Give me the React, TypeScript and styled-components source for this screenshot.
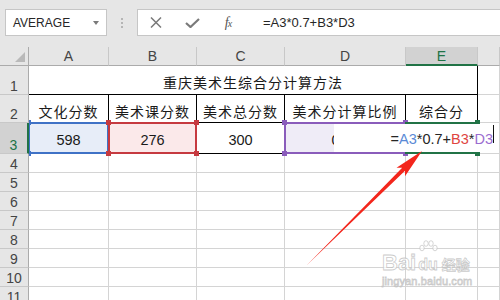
import React from "react";
import styled, { createGlobalStyle } from "styled-components";

const GlobalStyle = createGlobalStyle`
  html, body { margin: 0; padding: 0; background: #ffffff; }
  body { font-family: "Liberation Sans", "Noto Sans CJK SC", sans-serif; }
`;

const Page = styled.div`
  width: 500px;
  height: 300px;
  overflow: hidden;
  position: relative;
  background: #ffffff;
`;

/* ---------- toolbar ---------- */
const Toolbar = styled.div`
  height: 47px;
  box-sizing: border-box;
  background: #e6e6e6;
  display: flex;
  align-items: flex-start;
  padding: 9px 0 0 5px;
`;

const NameBox = styled.div`
  width: 102px;
  height: 27px;
  box-sizing: border-box;
  border: 1px solid #c6c6c6;
  background: #fff;
  display: flex;
  align-items: center;
  justify-content: space-between;
  padding: 0 7px;
  font-size: 12px;
  color: #262626;
`;

const Caret = styled.span`
  width: 0;
  height: 0;
  border-left: 3.5px solid transparent;
  border-right: 3.5px solid transparent;
  border-top: 4px solid #7a7a7a;
`;

const Grip = styled.div`
  width: 30px;
  height: 27px;
  display: flex;
  flex-direction: column;
  align-items: center;
  justify-content: center;
  gap: 2px;
`;

const GripDot = styled.span`
  width: 2px;
  height: 2px;
  background: #b5b5b5;
`;

const FormulaBox = styled.div`
  flex: 1;
  margin-right: -4px;
  height: 27px;
  box-sizing: border-box;
  border: 1px solid #c6c6c6;
  background: #fff;
  display: flex;
  align-items: center;
`;

const ToolButton = styled.div`
  width: 36px;
  height: 25px;
  display: flex;
  align-items: center;
  justify-content: center;
  color: #777;
`;

const FxLabel = styled.span`
  font-family: "Liberation Serif", serif;
  font-style: italic;
  font-size: 14px;
  color: #555;
  letter-spacing: -1px;
  & > small { font-size: 10px; }
`;

const FormulaText = styled.div`
  margin-left: 17px;
  font-size: 13px;
  color: #262626;
`;

/* ---------- sheet ---------- */
const Sheet = styled.div`
  display: grid;
  grid-template-columns: 29px 80px 88px 88px 121px 72px 1fr;
  grid-template-rows: 19px 29px 28px 31px repeat(8, 19px);
  font-size: 14px;
  color: #1a1a1a;
`;

const Corner = styled.div`
  box-sizing: border-box;
  background: #e6e6e6;
  border-right: 1px solid #ababab;
  border-bottom: 1px solid #ababab;
  position: relative;
  &::after {
    content: "";
    position: absolute;
    right: 3px;
    bottom: 3px;
    width: 0;
    height: 0;
    border-left: 10px solid transparent;
    border-bottom: 10px solid #b9b9b9;
  }
`;

const ColHeader = styled.div<{ $selected?: boolean }>`
  box-sizing: border-box;
  background: ${(p) => (p.$selected ? "#d2d2d2" : "#e6e6e6")};
  border-right: 1px solid #c8c8c8;
  border-bottom: ${(p) => (p.$selected ? "2px solid #217346" : "1px solid #ababab")};
  color: ${(p) => (p.$selected ? "#217346" : "#444")};
  display: flex;
  align-items: center;
  justify-content: center;
  font-size: 14px;
`;

const RowHeader = styled.div<{ $selected?: boolean }>`
  box-sizing: border-box;
  position: relative;
  z-index: 2;
  background: ${(p) => (p.$selected ? "#d2d2d2" : "#e6e6e6")};
  border-right: ${(p) => (p.$selected ? "2px solid #217346" : "1px solid #ababab")};
  border-bottom: 1px solid #c8c8c8;
  color: ${(p) => (p.$selected ? "#217346" : "#444")};
  display: flex;
  align-items: flex-end;
  justify-content: center;
  font-size: 14px;
`;

const Cell = styled.div<{ $line?: string; $fill?: string; $span?: number }>`
  box-sizing: border-box;
  position: relative;
  background: ${(p) => p.$fill || "#fff"};
  border-right: 1px solid ${(p) => p.$line || "#d4d4d4"};
  border-bottom: 1px solid ${(p) => p.$line || "#d4d4d4"};
  grid-column: ${(p) => (p.$span ? `span ${p.$span}` : "auto")};
  display: flex;
  align-items: center;
  justify-content: center;
  padding-top: 4px;
  white-space: nowrap;
`;

const CjkText = styled.span`
  font-family: "Noto Sans CJK SC", sans-serif;
  font-size: 14px;
  letter-spacing: 1px;
  line-height: 20px;
`;

const NumText = styled.span<{ $shift?: number }>`
  font-size: 14.5px;
  margin-right: ${(p) => p.$shift || 0}px;
`;

const Highlight = styled.div<{ $color: string }>`
  position: absolute;
  top: -1px;
  left: -1px;
  right: -1px;
  bottom: -1px;
  border: 2px solid ${(p) => p.$color};
  z-index: 1;
  pointer-events: none;
`;

const Handle = styled.span<{ $color: string; $side: "left" | "right"; $edge: "top" | "bottom" }>`
  position: absolute;
  width: 5px;
  height: 5px;
  background: ${(p) => p.$color};
  ${(p) => (p.$side === "left" ? "left: -4px;" : "right: -4px;")}
  ${(p) => (p.$edge === "top" ? "top: -4px;" : "bottom: -4px;")}
`;

const EditBox = styled.div`
  position: absolute;
  top: 1px;
  bottom: 1px;
  left: -72px;
  right: -20px;
  background: #fff;
  z-index: 3;
  display: flex;
  justify-content: flex-end;
  align-items: center;
  padding-right: 3px;
  padding-top: 1px;
  font-size: 14.5px;
  color: #262626;
  white-space: nowrap;
`;

const Ref = styled.span<{ $color: string }>`
  color: ${(p) => p.$color};
`;

const Caret2 = styled.span`
  align-self: flex-start;
  margin-top: 0px;
  width: 1px;
  height: 18px;
  background: #111;
`;

/* ---------- overlays ---------- */
const ArrowLayer = styled.svg`
  position: absolute;
  left: 0;
  top: 0;
  z-index: 5;
  pointer-events: none;
`;

const Watermark = styled.div`
  position: absolute;
  left: 382px;
  top: 240px;
  width: 92px;
  z-index: 4;
  color: rgba(255, 255, 255, 0.75);
  -webkit-text-stroke: 0.8px rgba(185, 185, 185, 0.75);
  font-family: "Liberation Sans", "Noto Sans CJK SC", sans-serif;
  font-weight: bold;
`;

const WmLine = styled.div`
  display: flex;
  align-items: flex-end;
  height: 34px;
  white-space: nowrap;
`;

const WmBig = styled.span`
  font-size: 22px;
  line-height: 22px;
`;

const WmDu = styled.span`
  position: relative;
  font-size: 16px;
  line-height: 18px;
  margin: 0 4px 0 2px;
`;

const WmCn = styled.span`
  font-family: "Noto Sans CJK SC", sans-serif;
  font-size: 14px;
  line-height: 20px;
`;

const Paw = styled.svg`
  position: absolute;
  left: 0px;
  top: -16px;
`;

const WmUrl = styled.div`
  font-size: 11px;
  font-weight: normal;
  margin-top: 1px;
  letter-spacing: 0.1px;
`;

const BLUE = "#3f72c6";
const RED = "#c63a40";
const PURPLE = "#8a5cbb";
const GREEN = "#217346";

function Mark({ color, left = true, right = true }: { color: string; left?: boolean; right?: boolean }) {
  return (
    <Highlight $color={color}>
      {left && <Handle $color={color} $side="left" $edge="top" />}
      {left && <Handle $color={color} $side="left" $edge="bottom" />}
      {right && <Handle $color={color} $side="right" $edge="top" />}
      {right && <Handle $color={color} $side="right" $edge="bottom" />}
    </Highlight>
  );
}

const columns = ["A", "B", "C", "D", "E"];
const headers = ["文化分数", "美术课分数", "美术总分数", "美术分计算比例", "综合分"];
const emptyRows = [4, 5, 6, 7, 8, 9, 10, 11];

export default function App() {
  return (
    <>
      <GlobalStyle />
      <Page>
        <Toolbar>
          <NameBox>
            <span>AVERAGE</span>
            <Caret />
          </NameBox>
          <Grip>
            <GripDot />
            <GripDot />
            <GripDot />
          </Grip>
          <FormulaBox>
            <ToolButton>
              <svg width="12" height="11" viewBox="0 0 12 11">
                <path d="M1 0.5 L11 10.5 M11 0.5 L1 10.5" stroke="#7a7a7a" strokeWidth="1.5" fill="none" />
              </svg>
            </ToolButton>
            <ToolButton>
              <svg width="15" height="10" viewBox="0 0 15 10">
                <path d="M1 5 L5.5 9 L14 1" stroke="#7a7a7a" strokeWidth="2.2" fill="none" />
              </svg>
            </ToolButton>
            <ToolButton>
              <FxLabel>
                f<small>x</small>
              </FxLabel>
            </ToolButton>
            <FormulaText>=A3*0.7+B3*D3</FormulaText>
          </FormulaBox>
        </Toolbar>

        <Sheet>
          <Corner />
          {columns.map((c) => (
            <ColHeader key={c} $selected={c === "E"}>
              {c}
            </ColHeader>
          ))}
          <ColHeader />

          <RowHeader>1</RowHeader>
          <Cell $span={5} $line="#000">
            <CjkText>重庆美术生综合分计算方法</CjkText>
          </Cell>
          <Cell />

          <RowHeader>2</RowHeader>
          {headers.map((h) => (
            <Cell key={h} $line="#000">
              <CjkText>{h}</CjkText>
            </Cell>
          ))}
          <Cell />

          <RowHeader $selected>3</RowHeader>
          <Cell $line="#000" $fill="#e7edf8">
            <NumText>598</NumText>
            <Mark color={BLUE} />
          </Cell>
          <Cell $line="#000" $fill="#fbe9ea">
            <NumText>276</NumText>
            <Mark color={RED} />
          </Cell>
          <Cell $line="#000">
            <NumText>300</NumText>
          </Cell>
          <Cell $line="#000" $fill="#efecf7">
            <NumText $shift={7}>0.7</NumText>
            <Mark color={PURPLE} />
          </Cell>
          <Cell $line="#000">
            <Mark color={GREEN} left={false} />
            <EditBox>
              <span>=</span>
              <Ref $color="#5a8ad6">A3</Ref>
              <span>*0.7+</span>
              <Ref $color="#e0453f">B3</Ref>
              <span>*</span>
              <Ref $color="#9a6cd0">D3</Ref>
              <Caret2 />
            </EditBox>
          </Cell>
          <Cell />

          {emptyRows.map((r) => (
            <React.Fragment key={r}>
              <RowHeader>{r}</RowHeader>
              <Cell />
              <Cell />
              <Cell />
              <Cell />
              <Cell />
              <Cell />
            </React.Fragment>
          ))}
        </Sheet>

        <ArrowLayer width="500" height="300" viewBox="0 0 500 300">
          <polygon
            points="307,265 405,170.7 405,176.3 422,151 396.5,167.8 402.2,167.8"
            fill="#f3261c"
          />
        </ArrowLayer>

        <Watermark>
          <WmLine>
            <WmBig>Bai</WmBig>
            <WmDu>
              <Paw width="20" height="16" viewBox="0 0 20 16">
                <g fill="rgba(255,255,255,0.75)" stroke="rgba(185,185,185,0.75)" strokeWidth="0.8">
                  <ellipse cx="4" cy="8" rx="2.2" ry="2.8" />
                  <ellipse cx="8" cy="3.5" rx="2.2" ry="2.8" />
                  <ellipse cx="13" cy="3.5" rx="2.2" ry="2.8" />
                  <ellipse cx="17" cy="8" rx="2.2" ry="2.8" />
                </g>
              </Paw>
              du
            </WmDu>
            <WmCn>经验</WmCn>
          </WmLine>
          <WmUrl>jingyan.baidu.com</WmUrl>
        </Watermark>
      </Page>
    </>
  );
}
